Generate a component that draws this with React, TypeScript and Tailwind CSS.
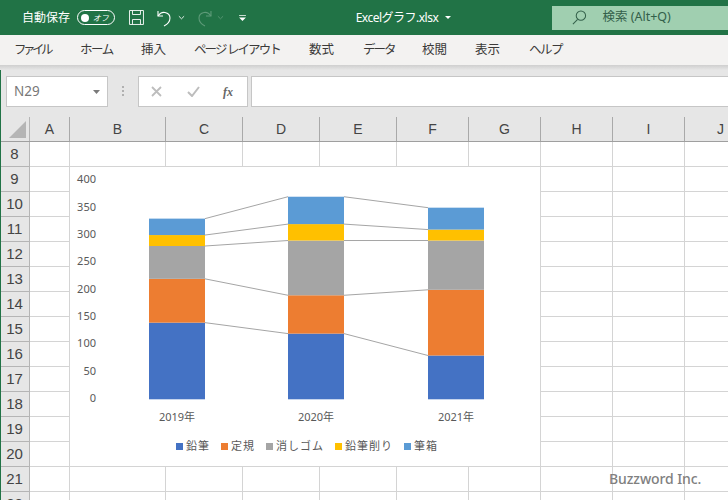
const menus = [
  { label: "ファイル", cls: "w-[38px] tracking-[-3.500px]" },
  { label: "ホーム", cls: "w-[33px] tracking-[-1.500px]" },
  { label: "挿入", cls: "w-[25px] tracking-[0px]" },
  { label: "ページ レイアウト", cls: "w-[87px] tracking-[-1.900px]" },
  { label: "数式", cls: "w-[26px] tracking-[0px]" },
  { label: "データ", cls: "w-[31px] tracking-[-2px]" },
  { label: "校閲", cls: "w-[25px] tracking-[0px]" },
  { label: "表示", cls: "w-[26px] tracking-[0px]" },
  { label: "ヘルプ", cls: "w-[32px] tracking-[-1.500px]" },
];

const columns = [
  { name: "A", width: "w-[40px]" },
  { name: "B", width: "w-[96px]" },
  { name: "C", width: "w-[77px]" },
  { name: "D", width: "w-[77px]" },
  { name: "E", width: "w-[77px]" },
  { name: "F", width: "w-[72px]" },
  { name: "G", width: "w-[72px]" },
  { name: "H", width: "w-[72px]" },
  { name: "I", width: "w-[72px]" },
  { name: "J", width: "w-[72px]" },
];

const rows = [8, 9, 10, 11, 12, 13, 14, 15, 16, 17, 18, 19, 20, 21, 22];

// stacked values, bottom to top
const series = [
  { name: "鉛筆", color: "#4472c4", values: [140, 120, 80] },
  { name: "定規", color: "#ed7d31", values: [80, 70, 120] },
  { name: "消しゴム", color: "#a5a5a5", values: [60, 100, 90] },
  { name: "鉛筆削り", color: "#ffc000", values: [20, 30, 20] },
  { name: "筆箱", color: "#5b9bd5", values: [30, 50, 40] },
];

const barX = [149, 288, 428];
const years = ["2019年", "2020年", "2021年"];
const legendX = [
  { box: 176, text: 186 },
  { box: 221, text: 231 },
  { box: 266, text: 276 },
  { box: 335, text: 345 },
  { box: 404, text: 414 },
];

const y = (v: number) => 399.3 - v * 0.5475;

function Chart() {
  const totals = [0, 0, 0];
  const stacked = series.map((s) => {
    const bars = s.values.map((v, i) => {
      const from = totals[i];
      totals[i] += v;
      return { from, to: totals[i] };
    });
    return { ...s, bars };
  });

  return (
    <svg viewBox="70 167 470 299" className="absolute left-[70px] top-[167px] w-[470px] h-[299px] bg-white">
      {[0, 50, 100, 150, 200, 250, 300, 350, 400].map((t) => (
        <text key={t} x="96" y={399.3 - t * 0.5465 + 2.700} textAnchor="end" fontSize="11" fill="#595959">
          {t}
        </text>
      ))}
      {stacked.map((s) =>
        s.bars.slice(0, 2).map((b, i) => (
          <line key={s.name + i} x1={barX[i] + 56} y1={y(b.to)} x2={barX[i + 1]} y2={y(s.bars[i + 1].to)} stroke="#a5a5a5" strokeWidth="1" />
        ))
      )}
      {stacked.map((s) =>
        s.bars.map((b, i) => (
          <rect key={s.name + i} x={barX[i]} y={y(b.to)} width="56" height={y(b.from) - y(b.to)} fill={s.color} />
        ))
      )}
      {years.map((year, i) => (
        <text key={year} x={barX[i] + 28} y="421" textAnchor="middle" fontSize="11" fill="#595959">
          {year}
        </text>
      ))}
      {series.map((s, i) => (
        <g key={s.name}>
          <rect x={legendX[i].box} y="443" width="7" height="7" fill={s.color} />
          <text x={legendX[i].text} y="450" fontSize="11" letterSpacing="1" fill="#595959">
            {s.name}
          </text>
        </g>
      ))}
    </svg>
  );
}

export default function App() {
  return (
    <div className="relative w-[728px] h-[500px] overflow-hidden bg-white font-['Noto_Sans','Noto_Sans_CJK_JP',sans-serif]">
      {/* title bar */}
      <div className="flex items-center h-[35px] bg-[#217346] text-white text-[12px]">
        <span className="ml-[22px] w-[49px] whitespace-nowrap">自動保存</span>
        <div className="ml-[6px] flex items-center justify-between w-[38px] h-[15px] rounded-full border border-white px-[3px]">
          <div className="w-[8px] h-[8px] rounded-full bg-white" />
          <span className="text-[8px] italic leading-none mr-[2px]">オフ</span>
        </div>
        <svg viewBox="0 0 17 17" className="ml-[13px] w-[17px] h-[17px]" fill="none" stroke="white" strokeWidth="0.900">
          <path d="M1.500 1.500h14v14h-14z" />
          <path d="M4.500 1.500v4h8v-4M4.500 15.500v-5h8v5" />
        </svg>
        <svg viewBox="0 0 16 18" className="ml-[12px] w-[16px] h-[18px]" fill="none" stroke="white" strokeWidth="1.100">
          <path d="M1 2v5h5" />
          <path d="M1 7c2-3 4.500-4 7-3.500 3 .6 5 3 5 5.500 0 3-2 6-6 8" />
        </svg>
        <svg viewBox="0 0 8 5" className="ml-[5px] w-[7px] h-[5px]" fill="none" stroke="white" strokeWidth="1">
          <path d="M1 1l3 3 3-3" />
        </svg>
        <svg viewBox="0 0 16 18" className="ml-[11px] w-[16px] h-[18px]" fill="none" stroke="#5d9a78" strokeWidth="1.100">
          <path d="M15 2v5h-5" />
          <path d="M15 7c-2-3-4.500-4-7-3.500-3 .6-5 3-5 5.500 0 3 2 6 6 8" />
        </svg>
        <svg viewBox="0 0 8 5" className="ml-[5px] w-[7px] h-[5px]" fill="none" stroke="#5d9a78" strokeWidth="1">
          <path d="M1 1l3 3 3-3" />
        </svg>
        <svg viewBox="0 0 8 7" className="ml-[15px] w-[7px] h-[6px]" fill="white">
          <path d="M0 0h8v1H0zM0 3h8L4 7z" />
        </svg>
        <span className="ml-[110px] w-[90px] whitespace-nowrap tracking-[-0.500px]">Excelグラフ.xlsx</span>
        <svg viewBox="0 0 6 3" className="w-[6px] h-[3px]" fill="white">
          <path d="M0 0h6L3 3z" />
        </svg>
        <div className="ml-[101px] flex items-center w-[176px] h-[24px] bg-[#a0cfb0] text-[#33604a]">
          <svg viewBox="0 0 16 16" className="ml-[20px] w-[15px] h-[15px]" fill="none" stroke="#33604a" strokeWidth="1.100">
            <circle cx="9.500" cy="6" r="5" />
            <path d="M6 10l-5 5" />
          </svg>
          <span className="ml-[15px] text-[12.500px] whitespace-nowrap">検索 (Alt+Q)</span>
        </div>
      </div>

      {/* ribbon tabs */}
      <div className="flex items-center gap-[28px] h-[30px] px-[14px] bg-[#f3f2f1] text-[12.500px] text-[#3b3a39] whitespace-nowrap">
        {menus.map((m) => (
          <span key={m.label} className={`${m.cls} shrink-0`}>
            {m.label}
          </span>
        ))}
      </div>
      <div className="h-[5px] bg-gradient-to-b from-[#cfcfcf] to-[#e6e6e6]" />

      {/* formula bar */}
      <div className="flex h-[47px] pt-[6px] pl-[6px] bg-[#e6e6e6]">
        <div className="flex items-center justify-between w-[102px] h-[31px] pl-[7px] pr-[7px] bg-white border border-[#c6c6c6] text-[13.500px] text-[#777]">
          <span>N29</span>
          <svg viewBox="0 0 7 4" className="w-[7px] h-[4px]" fill="#7a7a7a">
            <path d="M0 0h7L3.500 4z" />
          </svg>
        </div>
        <div className="flex flex-col gap-[2px] w-[30px] items-center pt-[10px]">
          <div className="w-[2px] h-[2px] bg-[#b0b0b0]" />
          <div className="w-[2px] h-[2px] bg-[#b0b0b0]" />
          <div className="w-[2px] h-[2px] bg-[#b0b0b0]" />
        </div>
        <div className="flex items-center w-[110px] h-[31px] bg-white border border-[#c6c6c6]">
          <svg viewBox="0 0 11 11" className="ml-[12px] w-[11px] h-[11px]" fill="none" stroke="#bdbdbd" strokeWidth="1.800">
            <path d="M1 1l9 9M10 1l-9 9" />
          </svg>
          <svg viewBox="0 0 13 11" className="ml-[25px] w-[13px] h-[11px]" fill="none" stroke="#bdbdbd" strokeWidth="2">
            <path d="M1 6l4 4 7-9" />
          </svg>
          <span className="ml-[23px] font-['Liberation_Serif',serif] italic font-bold text-[12px] text-[#666]">fx</span>
        </div>
        <div className="ml-[3px] flex-1 h-[31px] bg-white border-y border-l border-[#c6c6c6]" />
      </div>

      {/* sheet */}
      <div className="font-['Liberation_Sans',sans-serif] text-[#444]">
        <div className="flex h-[25px] bg-[#e6e6e6] border-b border-[#9f9f9f]">
          <div className="relative w-[30px] shrink-0 border-r border-[#b5b5b5]">
            <div className="absolute right-[3px] bottom-[3px] w-0 h-0 border-l-[17px] border-l-transparent border-b-[17px] border-b-[#b5b5b5]" />
          </div>
          {columns.map((c) => (
            <div key={c.name} className={`${c.width} shrink-0 flex items-center justify-center border-r border-[#a9a9a9] text-[14px]`}>
              {c.name}
            </div>
          ))}
        </div>
        {rows.map((r) => (
          <div key={r} className="flex h-[25px]">
            <div className="w-[30px] shrink-0 flex items-center justify-center bg-[#e6e6e6] border-r border-b border-[#b5b5b5] text-[15px]">
              {r}
            </div>
            {columns.map((c) => (
              <div key={c.name} className={`${c.width} shrink-0 border-r border-b border-[#d4d4d4]`} />
            ))}
          </div>
        ))}
      </div>

      <div className="absolute left-0 top-[70px] bottom-0 w-[1px] bg-[#217346]" />
      <Chart />
      <span className="absolute left-[609px] top-[468px] text-[14px] font-medium tracking-[-0.100px] text-[#808080] leading-[22px]">
        Buzzword Inc.
      </span>
    </div>
  );
}
